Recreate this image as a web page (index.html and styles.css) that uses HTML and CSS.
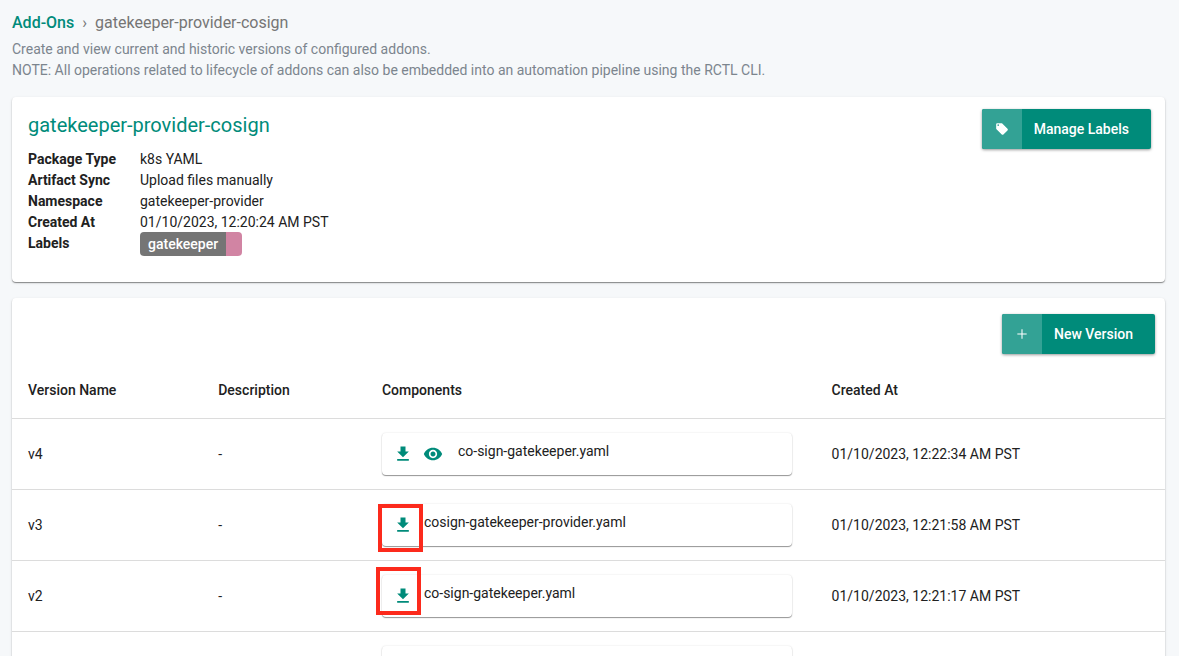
FILE: index.html
```html
<!DOCTYPE html>
<html lang="en">
<head>
<meta charset="utf-8">
<title>gatekeeper-provider-cosign</title>
<link rel="stylesheet" href="styles.css">
</head>
<body>
<svg class="sprite" aria-hidden="true">
  <symbol id="download" viewBox="0 0 24 24"><path d="M19 9h-4V3H9v6H5l7 7 7-7zM5 18v2h14v-2H5z"/></symbol>
  <symbol id="eye" viewBox="0 0 24 24"><path d="M12 4.500C7 4.500 2.730 7.610 1 12c1.730 4.390 6 7.500 11 7.500s9.270-3.110 11-7.500c-1.730-4.390-6-7.500-11-7.500zM12 17c-2.760 0-5-2.240-5-5s2.240-5 5-5 5 2.240 5 5-2.240 5-5 5zm0-8c-1.660 0-3 1.340-3 3s1.340 3 3 3 3-1.340 3-3-1.340-3-3-3z"/></symbol>
  <symbol id="tag" viewBox="0 0 24 24"><path d="M21.410 11.580l-9-9C12.050 2.220 11.550 2 11 2H4c-1.100 0-2 .9-2 2v7c0 .55.220 1.050.590 1.420l9 9c.36.36.86.58 1.410.58.550 0 1.050-.22 1.410-.590l7-7c.370-.360.590-.860.590-1.410 0-.550-.230-1.060-.590-1.420zM5.500 7C4.670 7 4 6.330 4 5.500S4.670 4 5.500 4 7 4.670 7 5.500 6.330 7 5.500 7z"/></symbol>
  <symbol id="plus" viewBox="0 0 24 24"><path d="M20 12.900h-7.100V20h-1.800v-7.100H4v-1.800h7.100V4h1.800v7.100H20z"/></symbol>
</svg>
<main class="page">
  <header class="intro">
    <nav class="crumbs" aria-label="Breadcrumb">
      <a href="#">Add-Ons</a><span class="crumb-sep">›</span><span>gatekeeper-provider-cosign</span>
    </nav>
    <p class="note">Create and view current and historic versions of configured addons.<br>NOTE: All operations related to lifecycle of addons can also be embedded into an automation pipeline using the RCTL CLI.</p>
  </header>

  <section class="card summary">
    <div>
      <h1 class="title">gatekeeper-provider-cosign</h1>
      <dl class="facts">
        <dt>Package Type</dt><dd>k8s YAML</dd>
        <dt>Artifact Sync</dt><dd>Upload files manually</dd>
        <dt>Namespace</dt><dd>gatekeeper-provider</dd>
        <dt>Created At</dt><dd>01/10/2023, 12:20:24 AM PST</dd>
        <dt>Labels</dt><dd class="labels"><span class="label">gatekeeper</span></dd>
      </dl>
    </div>
    <button class="action" type="button"><span class="action-icon"><svg class="icon-small"><use href="#tag"/></svg></span><span class="action-text">Manage Labels</span></button>
  </section>

  <section class="card">
    <div class="toolbar">
      <button class="action" type="button"><span class="action-icon"><svg class="icon-small"><use href="#plus"/></svg></span><span class="action-text">New Version</span></button>
    </div>
    <table class="versions">
      <colgroup><col class="col-name"><col class="col-desc"><col class="col-comp"><col></colgroup>
      <thead>
        <tr><th>Version Name</th><th>Description</th><th>Components</th><th>Created At</th></tr>
      </thead>
      <tbody>
        <tr>
          <td>v4</td><td>-</td>
          <td class="component-cell"><div class="component">
            <button class="tool" type="button" aria-label="Download"><svg class="icon"><use href="#download"/></svg></button>
            <button class="tool" type="button" aria-label="View"><svg class="icon"><use href="#eye"/></svg></button>
            <span class="file file-spaced">co-sign-gatekeeper.yaml</span>
          </div></td>
          <td>01/10/2023, 12:22:34 AM PST</td>
        </tr>
        <tr>
          <td>v3</td><td>-</td>
          <td class="component-cell"><div class="component">
            <button class="tool" type="button" aria-label="Download"><svg class="icon"><use href="#download"/></svg></button>
            <span class="file">cosign-gatekeeper-provider.yaml</span>
            <span class="marker marker-first"></span>
          </div></td>
          <td>01/10/2023, 12:21:58 AM PST</td>
        </tr>
        <tr>
          <td>v2</td><td>-</td>
          <td class="component-cell"><div class="component">
            <button class="tool" type="button" aria-label="Download"><svg class="icon"><use href="#download"/></svg></button>
            <span class="file">co-sign-gatekeeper.yaml</span>
            <span class="marker marker-second"></span>
          </div></td>
          <td>01/10/2023, 12:21:17 AM PST</td>
        </tr>
        <tr>
          <td></td><td></td>
          <td class="component-cell"><div class="component"></div></td>
          <td></td>
        </tr>
      </tbody>
    </table>
  </section>
</main>
</body>
</html>
```
FILE: styles.css
```css
* { box-sizing: border-box; }

body {
  margin: 0;
  background: #f6f8fa;
  color: #212121;
  font: 14px/21px Roboto, "Liberation Sans", sans-serif;
}

.sprite { display: none; }

.page {
  height: 100vh;
  overflow: hidden;
  padding: 12px 14px 0 12px;
}

.intro { margin-bottom: 16px; }

.crumbs {
  display: flex;
  gap: 8px;
  margin-bottom: 6px;
  color: #757575;
  font-size: 16px;
  line-height: 21px;
}

.crumbs a {
  color: #008b7a;
  font-weight: 500;
  text-decoration: none;
}

.note {
  margin: 0;
  color: #7c858e;
}

.card {
  margin-bottom: 16px;
  border-radius: 4px;
  background: #fff;
  box-shadow: 0 1px 1px rgba(0, 0, 0, 0.4), 0 1px 3px rgba(0, 0, 0, 0.12);
}

.summary {
  display: flex;
  align-items: flex-start;
  justify-content: space-between;
  padding: 12px 14px 28px 16px;
}

.title {
  margin: 4px 0 12px;
  color: #008b7a;
  font-size: 20px;
  font-weight: 400;
  line-height: 24px;
}

.facts {
  display: grid;
  grid-template-columns: 112px auto;
  grid-auto-rows: 21px;
  margin: 0;
}

.facts dt { font-weight: 700; }
.facts dd { margin: 0; }

.labels {
  display: flex;
  align-items: center;
}

.label {
  padding: 0 8px;
  border-right: 16px solid #d184a3;
  border-radius: 4px;
  background: #757575;
  color: #fff;
  font-weight: 500;
  line-height: 24px;
}

.action {
  display: flex;
  height: 40px;
  padding: 0;
  overflow: hidden;
  border: 0;
  border-radius: 2px;
  background: #008b7a;
  box-shadow: 0 1px 3px rgba(0, 0, 0, 0.4);
  color: #fff;
  font: 500 14px/40px Roboto, "Liberation Sans", sans-serif;
}

.action-icon {
  display: flex;
  align-items: center;
  justify-content: center;
  width: 40px;
  height: 100%;
  background: #33a295;
}

.action-text { padding: 0 22px 0 12px; }

.icon-small {
  width: 14px;
  height: 14px;
  fill: currentColor;
}

.toolbar {
  display: flex;
  justify-content: flex-end;
  padding: 16px 10px 8px;
}

.versions {
  width: 100%;
  table-layout: fixed;
  border-collapse: collapse;
}

.col-name { width: 16.5%; }
.col-desc { width: 14.2%; }
.col-comp { width: 39%; }

.versions th,
.versions td {
  padding: 2px 16px 0;
  border-bottom: 1px solid #dcdcdc;
  text-align: left;
}

.versions th {
  height: 56px;
  font-weight: 500;
}

.versions td { height: 71px; }

.versions .component-cell { padding: 0 24px 0 16px; }

.component {
  position: relative;
  display: flex;
  align-items: center;
  height: 42px;
  padding-left: 6px;
  border-radius: 4px;
  box-shadow: 0 1px 1px rgba(0, 0, 0, 0.4), 0 0 2px rgba(0, 0, 0, 0.12);
}

.tool {
  display: flex;
  justify-content: center;
  width: 30px;
  padding: 0;
  border: 0;
  background: none;
  color: #008b7a;
}

.icon {
  width: 20px;
  height: 20px;
  fill: currentColor;
}

.file {
  padding: 0 0 4px 6px;
}

.file-spaced { padding-left: 10px; }

.marker {
  position: absolute;
  width: 45px;
  height: 48px;
  border: 4px solid #fc2a1c;
}

.marker-first { top: 0; left: -4px; }
.marker-second { top: -8px; left: -6px; }
```
